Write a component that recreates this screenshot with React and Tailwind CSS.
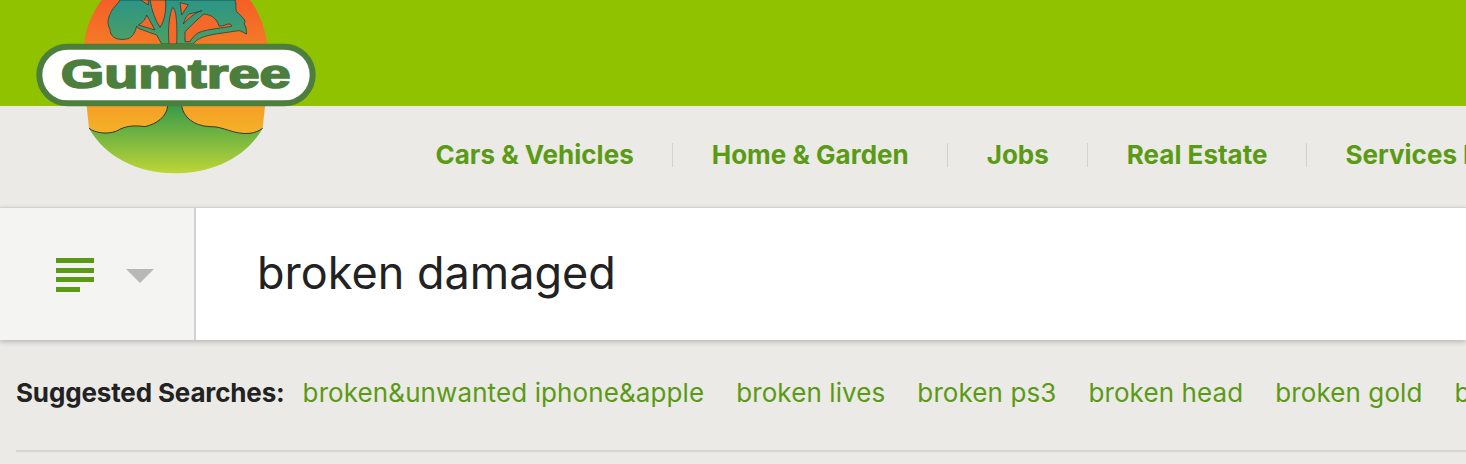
const navItems = ["Cars & Vehicles", "Home & Garden", "Jobs", "Real Estate", "Services For Sale"];
const suggestions = ["broken&unwanted iphone&apple", "broken lives", "broken ps3", "broken head", "broken gold", "broken"];

const Logo = () => (
  <svg viewBox="0 0 930 540" className="absolute left-[20px] top-0 w-[310px] h-[180px]">
    <defs>
      <linearGradient id="sun" x1="0" y1="0" x2="0" y2="1">
        <stop offset="0" stopColor="#f45f27" />
        <stop offset="1" stopColor="#f5b126" />
      </linearGradient>
      <linearGradient id="ground" x1="0" y1="0" x2="0" y2="1">
        <stop offset="0" stopColor="#3a9a4a" />
        <stop offset="1" stopColor="#bdd636" />
      </linearGradient>
      <linearGradient id="leaves" x1="0" y1="0" x2="0" y2="1">
        <stop offset="0" stopColor="#2b9586" />
        <stop offset="1" stopColor="#4f9f62" />
      </linearGradient>
    </defs>
    <path d="M245 0 C215 40 195 90 193 135 L200 318 L207 385 L240 400 L690 402 L728 385 L735 318 L742 135 C735 80 715 35 690 0 Z" fill="url(#sun)" />
    <path d="M207 385 C225 398 260 405 290 393 C315 378 340 375 375 380 C410 372 440 350 443 318 L485 318 C490 350 520 378 570 380 C610 378 640 405 690 400 C705 398 718 392 728 385 C680 470 580 520 465 520 C350 520 255 470 207 385 Z" fill="url(#ground)" />
    <path d="M207 385 C225 398 260 405 290 393 C315 378 340 375 375 380 C410 372 440 350 443 318 M485 318 C490 350 520 378 570 380 C610 378 640 405 690 400 C705 398 718 392 728 385" fill="none" stroke="#2f3a2c" strokeWidth="3" />
    {/* tree silhouette, the orange holes are drawn on top */}
    <path
      d="M300 0 C290 18 275 25 272 40 C262 55 262 75 270 88 C270 108 285 120 312 118 C335 118 345 100 350 78 L355 85 L410 105 L425 132 L520 132 C530 118 545 108 600 100 C625 97 650 92 660 92 L680 102 C678 88 680 80 672 72 C682 62 665 50 650 35 C645 25 650 10 645 0 Z"
      fill="url(#leaves)"
      stroke="#24443a"
      strokeWidth="2.5"
      strokeLinejoin="round"
    />
    <g fill="#f4692a" stroke="#24443a" strokeWidth="2.5" strokeLinejoin="round">
      <path d="M355 75 C368 68 378 55 380 45 C390 62 398 78 405 90 Z" />
      <path d="M390 0 L436 0 C440 25 435 60 420 82 C405 60 395 30 390 0 Z" />
      <path d="M362 0 L385 0 L385 15 Z" />
      <path d="M447 132 C443 90 448 40 458 22 C470 30 472 80 470 132 Z" />
      <path d="M480 8 L505 14 L485 45 Z" />
      <path d="M490 72 C495 55 500 48 508 42 L546 32 C525 38 505 55 490 72 Z" />
      <path d="M495 125 L495 95 C515 75 535 55 552 42 C575 45 590 55 597 78 C610 80 622 70 630 72 L636 78 C610 85 570 85 535 98 C525 105 515 115 510 125 Z" />
    </g>
    <rect x="58" y="140" width="820" height="170" rx="85" fill="#ffffff" stroke="#4c7f3d" strokeWidth="18" />
    <text x="122" y="265" textLength="690" lengthAdjust="spacingAndGlyphs" fill="#4c7f3d" stroke="#4c7f3d" strokeWidth="5" fontFamily="'Liberation Sans', sans-serif" fontWeight="700" fontSize="122">Gumtree</text>
  </svg>
);

const App = () => {
  return (
    <div className="relative h-[464px] w-[1466px] overflow-hidden bg-[#ebeae6] font-['Inter',sans-serif]">
      <div className="h-[106px] bg-[#91c200]" />

      <nav className="flex h-[101px] items-center pb-[4px] pl-[397px] whitespace-nowrap">
        {navItems.map((item, i) => (
          <div key={item} className="flex items-center">
            {i > 0 && <span className="h-[24px] w-[1px] bg-[#d2d2cf]" />}
            <a className="px-[38.5px] text-[26px] leading-[34px] font-bold text-[#5a9a14]">{item}</a>
          </div>
        ))}
      </nav>

      <div className="relative z-10 flex h-[133px] border-t-[1px] border-[#d2d2d0] bg-white shadow-[0_2px_5px_rgba(0,0,0,0.22)]">
        <div className="flex w-[196px] shrink-0 items-center border-r-[2px] border-[#d2d2d0] bg-[#f4f4f2] pt-[2px] pl-[56px]">
          <div className="flex w-[38px] flex-col gap-[4.5px]">
            <span className="h-[5px] w-[38px] bg-[#5a9a14]" />
            <span className="h-[5px] w-[38px] bg-[#5a9a14]" />
            <span className="h-[5px] w-[38px] bg-[#5a9a14]" />
            <span className="h-[5px] w-[24px] bg-[#5a9a14]" />
          </div>
          <span className="ml-[32px] mt-[2px] h-0 w-0 border-x-[14px] border-t-[14px] border-x-transparent border-t-[#b8b8b8]" />
        </div>
        <div className="flex items-center pb-[3px] pl-[61px] text-[45px] leading-none text-[#222222]">broken damaged</div>
      </div>

      <div className="h-[124px] pl-[16px]">
        <div className="flex h-[110px] items-start pt-[36px] whitespace-nowrap text-[26px] leading-[34px]">
          <span className="mr-[18px] font-bold tracking-[-0.15px] text-[#222222]">Suggested Searches:</span>
          {suggestions.map((s) => (
            <a key={s} className="mr-[32px] tracking-[0.1px] text-[#5a9a14]">{s}</a>
          ))}
        </div>
        <div className="h-[2px] w-full bg-[#d5d5d3]" />
      </div>

      <Logo />
    </div>
  );
};

export default App;
